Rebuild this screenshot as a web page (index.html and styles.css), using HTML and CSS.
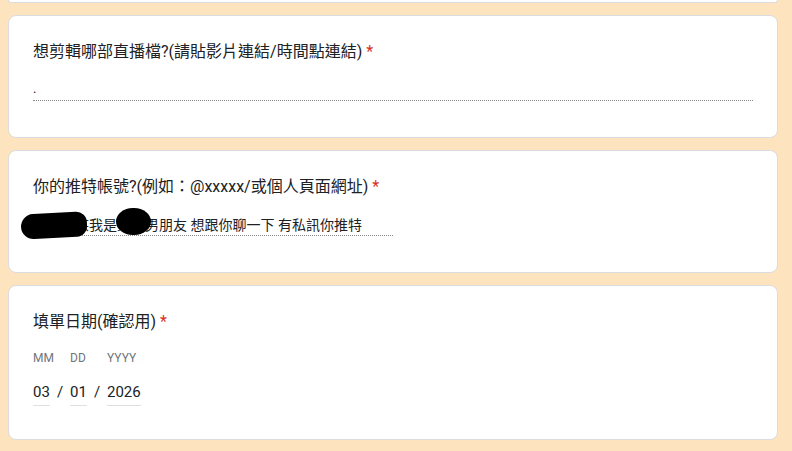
FILE: index.html
```html
<!DOCTYPE html>
<html lang="zh-Hant">
<head>
<meta charset="utf-8">
<title>表單</title>
<link rel="stylesheet" href="styles.css">
</head>
<body>
<div class="form">
  <div class="card card-tail"></div>

  <div class="card">
    <div class="q-title">想剪輯哪部直播檔?(請貼影片連結/時間點連結) <span class="req">*</span></div>
    <div class="answer answer-long"><span class="dot-text">.</span></div>
  </div>

  <div class="card">
    <div class="q-title">你的推特帳號?(例如：@xxxxx/或個人頁面網址) <span class="req">*</span></div>
    <div class="answer answer-short">某某某某我是某某男朋友 想跟你聊一下 有私訊你推特</div>
    <div class="blot blot-a"></div>
    <div class="blot blot-b"></div>
  </div>

  <div class="card">
    <div class="q-title">填單日期(確認用) <span class="req">*</span></div>
    <div class="date">
      <div class="d-label d-c1">MM</div>
      <div class="d-label d-c3">DD</div>
      <div class="d-label d-c5">YYYY</div>
      <div class="d-val d-c1">03</div>
      <div class="d-sep d-c2">/</div>
      <div class="d-val d-c3">01</div>
      <div class="d-sep d-c4">/</div>
      <div class="d-val d-c5">2026</div>
    </div>
  </div>
</div>
</body>
</html>
```

FILE: styles.css
```css
html, body {
  margin: 0;
  padding: 0;
  background: #fde3be;
  height: 100%;
  overflow: hidden;
}
body {
  font-family: Roboto, "Noto Sans CJK TC", sans-serif;
  color: #202124;
}
.form {
  padding: 0 14px 0 8px;
  display: flex;
  flex-direction: column;
  gap: 12px;
}
.card {
  position: relative;
  width: 770px;
  box-sizing: border-box;
  background: #fff;
  border: 1px solid #dadce0;
  border-radius: 8px;
  padding: 24px;
}
.card-tail {
  height: 3px;
  padding: 0;
  border-top: none;
  border-radius: 0 0 8px 8px;
}
.q-title {
  font-size: 16px;
  line-height: 24px;
  height: 24px;
  white-space: nowrap;
  letter-spacing: 0;
}
.req {
  color: #d93025;
}
.answer {
  margin-top: 16px;
  height: 20px;
  line-height: 20px;
  font-size: 14px;
  border-bottom: 1px dotted #8a8a8a;
  margin-bottom: 12px;
  white-space: nowrap;
  overflow: hidden;
}
.answer-long {
  width: 720px;
  height: 16px;
  padding-bottom: 4px;
  line-height: 16px;
}
.dot-text {
  font-size: 13px;
  color: #202124;
}
.answer-short {
  width: 360px;
}
.blot {
  position: absolute;
  background: #000;
}
.blot-a {
  left: 12px;
  top: 62px;
  width: 66px;
  height: 25px;
  border-radius: 14px 12px 12px 14px;
  transform: rotate(-3deg);
}
.blot-b {
  left: 107px;
  top: 57px;
  width: 35px;
  height: 27px;
  border-radius: 50% / 52%;
}
.date {
  display: grid;
  grid-template-columns: 17px 20px 17px 20px 34px;
  grid-template-rows: 16px 24px;
  row-gap: 16px;
  margin-top: 16px;
  margin-bottom: 9px;
}
.d-label {
  grid-row: 1;
  font-size: 12px;
  line-height: 16px;
  color: #70757a;
  white-space: nowrap;
}
.d-val {
  grid-row: 2;
  font-size: 15px;
  line-height: 20px;
  height: 20px;
  padding-bottom: 3px;
  border-bottom: 1px solid #e0e0e0;
  white-space: nowrap;
}
.d-sep {
  grid-row: 2;
  font-size: 15px;
  line-height: 20px;
  text-align: center;
}
.d-c1 { grid-column: 1; }
.d-c2 { grid-column: 2; }
.d-c3 { grid-column: 3; }
.d-c4 { grid-column: 4; }
.d-c5 { grid-column: 5; }
```
